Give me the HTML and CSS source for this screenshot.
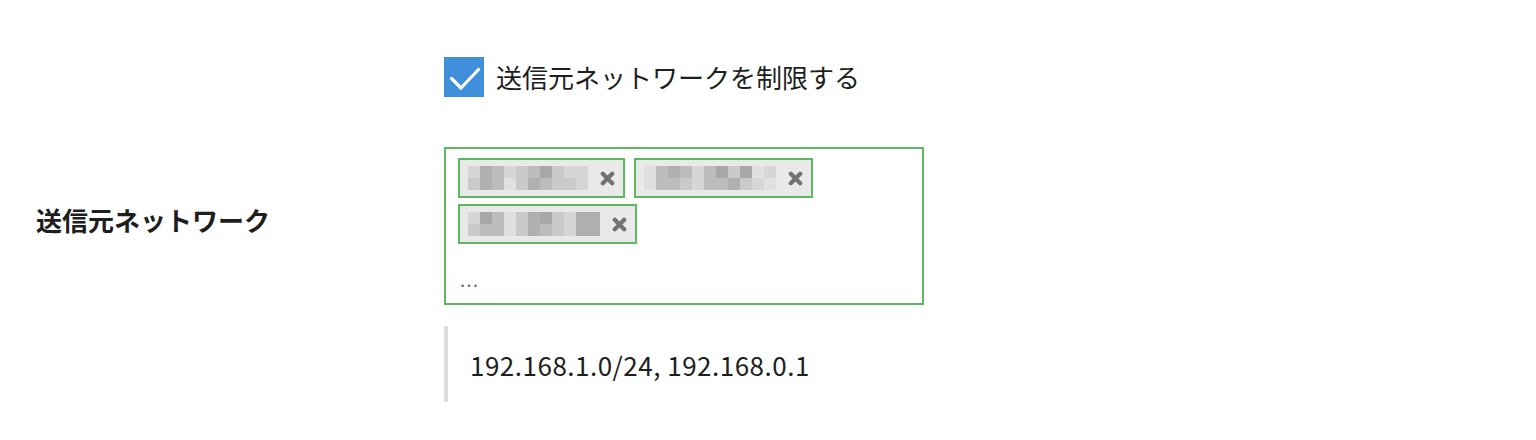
FILE: index.html
```html
<!DOCTYPE html>
<html lang="ja">
<head>
<meta charset="utf-8">
<link rel="stylesheet" href="styles.css">
</head>
<body>
<div class="form">
  <div></div>
  <label class="check-row">
    <span class="checkbox">
      <svg width="40" height="40" viewBox="0 0 40 40"><path d="M7.5 21.5 L17 31 L34.5 12.5" fill="none" stroke="#fff" stroke-width="3.2" stroke-linecap="round" stroke-linejoin="round"/></svg>
    </span>
    <span class="check-text">送信元ネットワークを制限する</span>
  </label>

  <div class="label">送信元ネットワーク</div>
  <div class="tagbox">
    <div class="tags">
      <span class="tag">
        <span class="mosaic m10">
          <i class="a"></i><i class="d"></i><i class="c"></i><i class="a"></i><i class="b"></i><i class="c"></i><i class="e"></i><i class="b"></i><i class="a"></i><i class="a"></i>
          <i class="b"></i><i class="d"></i><i class="c"></i><i class="f"></i><i class="b"></i><i class="d"></i><i class="c"></i><i class="b"></i><i class="b"></i><i class="a"></i>
        </span>
        <svg class="x" width="15" height="15" viewBox="0 0 15 15"><path d="M2.8 2.8 L12.2 12.2 M12.2 2.8 L2.8 12.2" stroke="#727272" stroke-width="4.2" stroke-linecap="round"/></svg>
      </span>
      <span class="tag">
        <span class="mosaic m11">
          <i class="f"></i><i class="c"></i><i class="d"></i><i class="c"></i><i class="a"></i><i class="c"></i><i class="e"></i><i class="b"></i><i class="e"></i><i class="f"></i><i class="a"></i>
          <i class="f"></i><i class="c"></i><i class="c"></i><i class="b"></i><i class="a"></i><i class="c"></i><i class="c"></i><i class="d"></i><i class="b"></i><i class="a"></i><i class="f"></i>
        </span>
        <svg class="x" width="15" height="15" viewBox="0 0 15 15"><path d="M2.8 2.8 L12.2 12.2 M12.2 2.8 L2.8 12.2" stroke="#727272" stroke-width="4.2" stroke-linecap="round"/></svg>
      </span>
      <span class="tag">
        <span class="mosaic m11">
          <i class="a"></i><i class="e"></i><i class="c"></i><i class="f"></i><i class="b"></i><i class="d"></i><i class="e"></i><i class="b"></i><i class="a"></i><i class="d"></i><i class="d"></i>
          <i class="b"></i><i class="c"></i><i class="c"></i><i class="f"></i><i class="b"></i><i class="d"></i><i class="c"></i><i class="b"></i><i class="a"></i><i class="d"></i><i class="d"></i>
        </span>
        <svg class="x" width="15" height="15" viewBox="0 0 15 15"><path d="M2.8 2.8 L12.2 12.2 M12.2 2.8 L2.8 12.2" stroke="#727272" stroke-width="4.2" stroke-linecap="round"/></svg>
      </span>
    </div>
    <div class="more">...</div>
  </div>

  <div></div>
  <div class="note">192.168.1.0/24, 192.168.0.1</div>
</div>
</body>
</html>
```

FILE: styles.css
```css
html, body {
  margin: 0;
  padding: 0;
  background: #fff;
}
body {
  font-family: "Noto Sans CJK JP", "Noto Sans", sans-serif;
  color: #1e1e1e;
}
.form {
  display: grid;
  grid-template-columns: 408px 480px;
  padding: 57px 0 0 36px;
}
.check-row {
  display: flex;
  align-items: center;
  gap: 12px;
  height: 40px;
  margin-bottom: 50px;
}
.checkbox {
  width: 40px;
  height: 40px;
  background: #3f8fda;
  display: block;
  flex: none;
}
.checkbox svg { display: block; }
.check-text {
  font-size: 26px;
  line-height: 40px;
}
.label {
  font-size: 26px;
  font-weight: 700;
  line-height: 38px;
  align-self: center;
  padding-bottom: 12px;
}
.tagbox {
  border: 2px solid #5fb760;
  padding: 9px 12px 0 12px;
  box-sizing: border-box;
  height: 158px;
}
.tags {
  display: flex;
  flex-wrap: wrap;
  gap: 6px 9px;
  width: 370px;
}
.tag {
  display: flex;
  align-items: center;
  gap: 12px;
  height: 40px;
  box-sizing: border-box;
  border: 2px solid #5fb760;
  background: #e9e9e9;
  padding: 0 8px;
}
.mosaic {
  display: grid;
  grid-auto-rows: 12px;
}
.mosaic.m10 { grid-template-columns: repeat(10, 12px); }
.mosaic.m11 { grid-template-columns: repeat(11, 12px); }
.mosaic i { display: block; }
.mosaic .a { background: #d6d6d6; }
.mosaic .b { background: #c9c9c9; }
.mosaic .c { background: #bcbcbc; }
.mosaic .d { background: #b0b0b0; }
.mosaic .e { background: #a7a7a7; }
.mosaic .f { background: #e0e0e0; }
.x { display: block; flex: none; }
.more {
  font-size: 18px;
  letter-spacing: 1.5px;
  color: #666;
  margin: 25px 0 0 2px;
  line-height: 20px;
}
.note {
  margin-top: 21px;
  border-left: 4px solid #dcdcdc;
  padding: 0 0 0 22px;
  height: 76px;
  display: flex;
  align-items: center;
  font-size: 26px;
  letter-spacing: 0.5px;
}
```
